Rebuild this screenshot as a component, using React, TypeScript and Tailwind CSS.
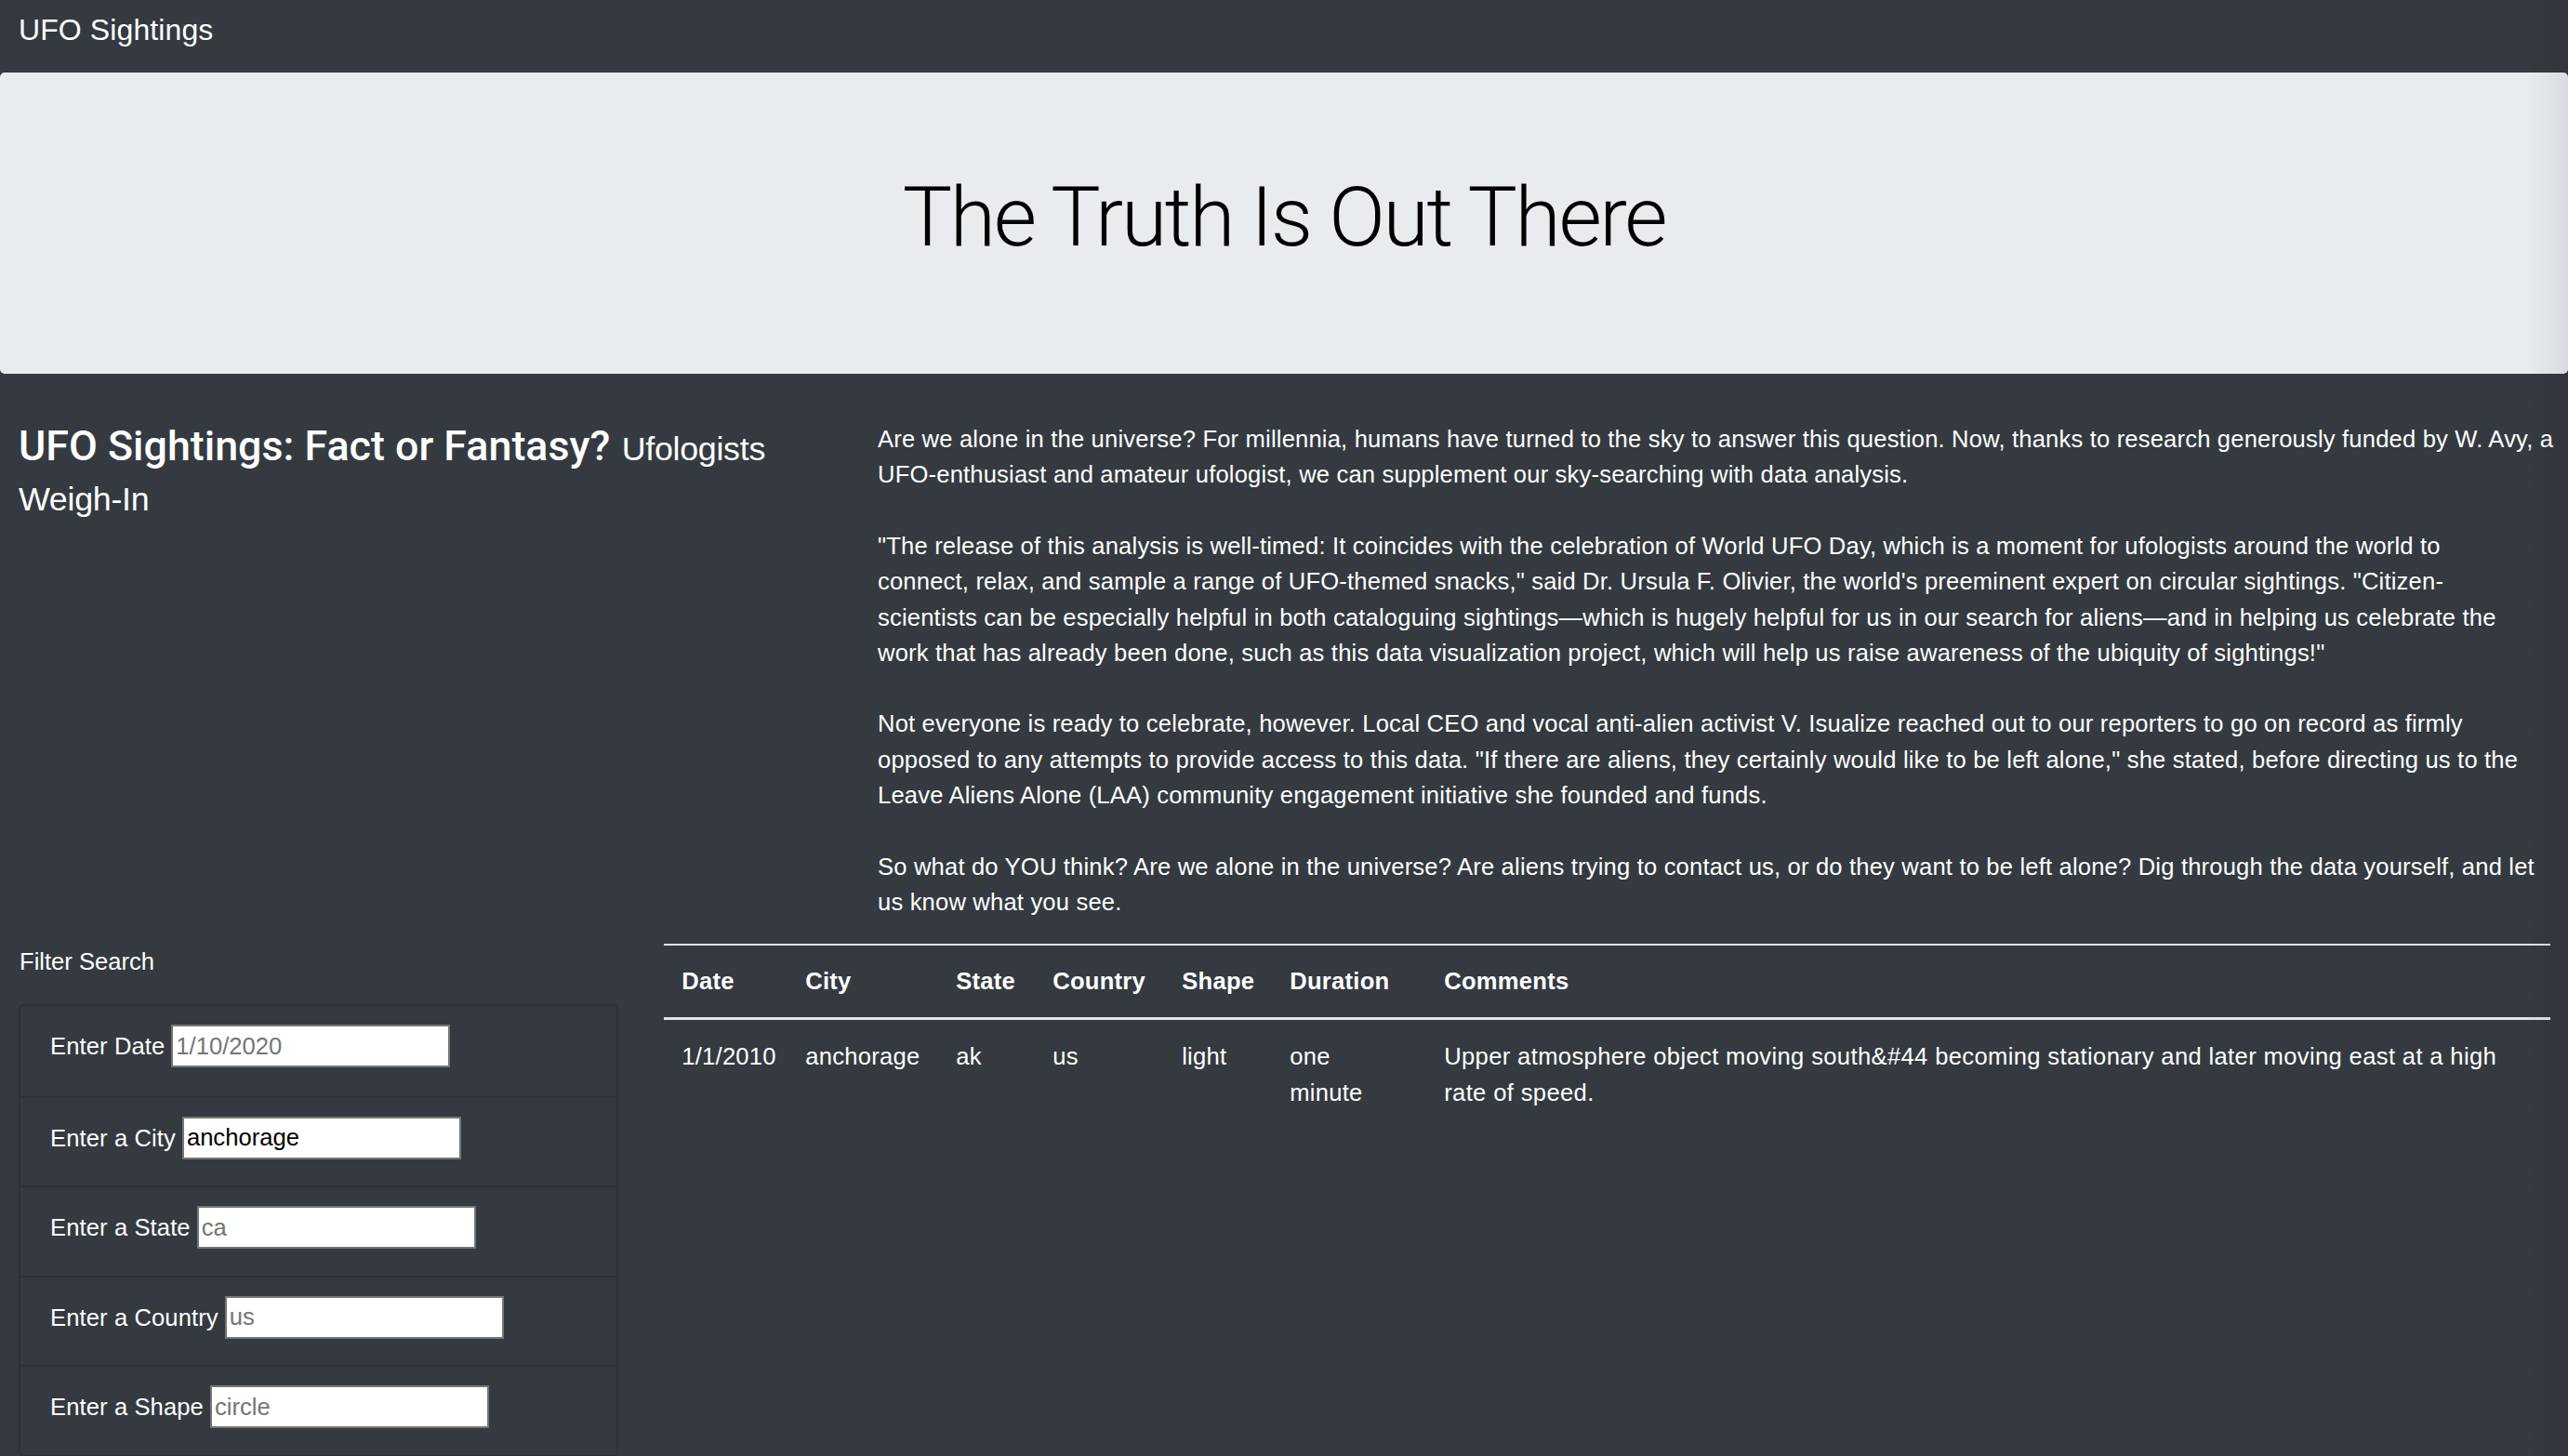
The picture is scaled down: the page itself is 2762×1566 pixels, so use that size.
import React from "react";

const paragraphs: string[][] = [
  [
    "Are we alone in the universe? For millennia, humans have turned to the sky to answer this question. Now, thanks to research generously funded by W. Avy, a",
    "UFO-enthusiast and amateur ufologist, we can supplement our sky-searching with data analysis.",
  ],
  [
    "\"The release of this analysis is well-timed: It coincides with the celebration of World UFO Day, which is a moment for ufologists around the world to",
    "connect, relax, and sample a range of UFO-themed snacks,\" said Dr. Ursula F. Olivier, the world's preeminent expert on circular sightings. \"Citizen-",
    "scientists can be especially helpful in both cataloguing sightings\u2014which is hugely helpful for us in our search for aliens\u2014and in helping us celebrate the",
    "work that has already been done, such as this data visualization project, which will help us raise awareness of the ubiquity of sightings!\"",
  ],
  [
    "Not everyone is ready to celebrate, however. Local CEO and vocal anti-alien activist V. Isualize reached out to our reporters to go on record as firmly",
    "opposed to any attempts to provide access to this data. \"If there are aliens, they certainly would like to be left alone,\" she stated, before directing us to the",
    "Leave Aliens Alone (LAA) community engagement initiative she founded and funds.",
  ],
  [
    "So what do YOU think? Are we alone in the universe? Are aliens trying to contact us, or do they want to be left alone? Dig through the data yourself, and let",
    "us know what you see.",
  ],
];

const filters = [
  { label: "Enter Date", placeholder: "1/10/2020", value: "" },
  { label: "Enter a City", placeholder: "los angeles", value: "anchorage" },
  { label: "Enter a State", placeholder: "ca", value: "" },
  { label: "Enter a Country", placeholder: "us", value: "" },
  { label: "Enter a Shape", placeholder: "circle", value: "" },
];

export default function App() {
  return (
    <div className="relative min-h-screen overflow-hidden bg-[#343a40] text-white font-['Liberation_Sans',Arial,sans-serif] text-[25.6px] leading-[38.4px]">
      {/* Navbar */}
      <nav className="h-[78px] pl-[20px] pt-[16px]">
        <span className="block text-[32px] leading-[32px] tracking-[0.1px] text-white">UFO Sightings</span>
      </nav>

      {/* Jumbotron */}
      <div className="h-[324px] rounded-[5px] bg-[#e9ecef] pt-[102px] text-center">
        <h1 className="font-['Roboto',sans-serif] text-[89.6px] font-light leading-[107.5px] tracking-[-2.4px] text-black">
          The Truth Is Out There
        </h1>
      </div>

      {/* Row 1 */}
      <div className="mt-[51px] flex pl-[20px] pr-[19px]">
        <div className="w-[924px] shrink-0 pr-[50px]">
          <h3 className="text-[44.8px] leading-[53.76px]">
            <span className="font-['Roboto',sans-serif] font-medium leading-[40px]">UFO Sightings: Fact or Fantasy?</span>{" "}
            <span className="text-[35.84px] leading-[40px] tracking-[-0.3px]">Ufologists</span>{" "}
            <span className="text-[35.84px] leading-[40px] tracking-[-0.3px]">Weigh-In</span>
          </h3>
        </div>
        <div className="min-w-0 flex-1 tracking-[0.17px]">
          {paragraphs.map((lines, i) => (
            <p key={i} className={`whitespace-nowrap ${i < paragraphs.length - 1 ? "mb-[38px]" : "mb-[25.6px]"}`}>
              {lines.map((l, j) => (
                <React.Fragment key={j}>
                  {l}
                  {j < lines.length - 1 && <br />}
                </React.Fragment>
              ))}
            </p>
          ))}
        </div>
      </div>

      {/* Row 2 */}
      <div className="flex pl-[20px] pr-[19px]">
        <div className="w-[694px] shrink-0">
          <div className="pl-[1px]">Filter Search</div>
          <div className="mt-[26.6px] w-[645px] rounded-[6px] border-2 border-[#2e3338]">
            {filters.map((f, i) => (
              <div
                key={f.label}
                className={`flex h-[96.5px] items-start pl-[32px] pt-[20px] ${i > 0 ? "border-t-2 border-[#2e3338]" : ""}`}
              >
                <div className="flex h-[46px] items-center">
                  <label className="whitespace-nowrap pt-[1px] tracking-[0.1px]">{f.label}</label>
                  <input
                    type="text"
                    placeholder={f.placeholder}
                    defaultValue={f.value}
                    className="ml-[7px] h-[46px] w-[300px] border-2 border-[#767676] bg-white px-[3px] text-[25.6px] leading-[38.4px] text-black outline-none placeholder:text-[#757575]"
                  />
                </div>
              </div>
            ))}
          </div>
        </div>
        <div className="min-w-0 flex-1">
          <table className="w-full table-fixed border-collapse text-left tracking-[0.25px]">
            <thead>
              <tr className="border-t-2 border-b-[3px] border-[#dee2e6]">
                <th className="w-[133px] px-[19.2px] py-[19.2px] font-bold">Date</th>
                <th className="w-[162px] px-[19.2px] py-[19.2px] font-bold">City</th>
                <th className="w-[104px] px-[19.2px] py-[19.2px] font-bold">State</th>
                <th className="w-[139px] px-[19.2px] py-[19.2px] font-bold">Country</th>
                <th className="w-[116px] px-[19.2px] py-[19.2px] font-bold">Shape</th>
                <th className="w-[166px] px-[19.2px] py-[19.2px] font-bold">Duration</th>
                <th className="px-[19.2px] py-[19.2px] font-bold">Comments</th>
              </tr>
            </thead>
            <tbody>
              <tr className="align-top">
                <td className="whitespace-nowrap px-[19.2px] pt-[20.5px] pb-[19.2px]">1/1/2010</td>
                <td className="whitespace-nowrap px-[19.2px] pt-[20.5px] pb-[19.2px]">anchorage</td>
                <td className="whitespace-nowrap px-[19.2px] pt-[20.5px] pb-[19.2px]">ak</td>
                <td className="whitespace-nowrap px-[19.2px] pt-[20.5px] pb-[19.2px]">us</td>
                <td className="whitespace-nowrap px-[19.2px] pt-[20.5px] pb-[19.2px]">light</td>
                <td className="whitespace-nowrap px-[19.2px] pt-[20.5px] pb-[19.2px]">
                  one
                  <br />
                  minute
                </td>
                <td className="whitespace-nowrap px-[19.2px] pt-[20.5px] pb-[19.2px] tracking-[0.35px]">
                  Upper atmosphere object moving south&amp;#44 becoming stationary and later moving east at a high
                  <br />
                  rate of speed.
                </td>
              </tr>
            </tbody>
          </table>
        </div>
      </div>

      {/* right-edge shading */}
      <div className="pointer-events-none absolute right-0 top-0 bottom-0 w-[45px] bg-linear-to-r from-transparent to-black/[0.07]" />
    </div>
  );
}
